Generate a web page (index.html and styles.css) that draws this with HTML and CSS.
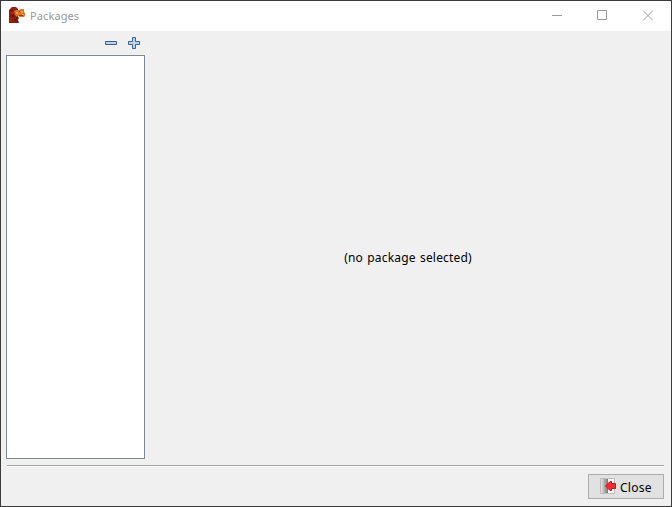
FILE: index.html
```html
<!DOCTYPE html>
<html lang="en">
<head>
<meta charset="utf-8">
<title>Packages</title>
<link rel="stylesheet" href="styles.css">
</head>
<body>
<div class="window">
  <header class="titlebar">
    <svg class="app-icon" width="16" height="16" viewBox="0 0 16 16">
      <path fill="#8f1c0c" d="M0 3 3 0h4l2 2v8l1 1-1 2 1 3H0z"/>
      <path fill="#64100a" d="M1 3h2v1H1zM3 8h2v2H3zM5 12h3v1H5zM7 14h2v1H7zM7 10h2v1H7z"/>
      <path fill="#ab260e" d="M2 5h3v2H2zM1 11h2v3H1zM4 1h3v1H4z"/>
      <path fill="#dc7323" d="M5 4 7 3h4l1-1h3v3l1 1v3l-1 1h-4l-2-1-1 1-2-2z"/>
      <path fill="#f29a4c" d="M12 4h2v2h-2zM13 7h2v1h-2zM7 5h2v2H7z"/>
      <path fill="#8f3b17" d="M10 4h1v1h-1zM10 8h4v1h-4z"/>
    </svg>
    <h1 class="title">Packages</h1>
    <svg class="controls" width="101" height="11" viewBox="0 0 101 11" fill="none" stroke="#999">
      <path d="M0 5.5h10M45.5 .5h9v9h-9z"/>
      <path d="m91 .5 10 10m0-10-10 10"/>
    </svg>
  </header>
  <main class="content">
    <aside class="sidebar">
      <div class="tools">
        <svg width="12" height="12" viewBox="0 0 12 12"><path class="tool-shape" d="M.5 4.5h11v3H.5z"/></svg>
        <svg width="12" height="12" viewBox="0 0 12 12"><path class="tool-shape" d="M4.5 .5h3v4h4v3h-4v4h-3v-4h-4v-3h4z"/></svg>
      </div>
      <div class="list"></div>
    </aside>
    <section class="detail"><span class="message">(no package selected)</span></section>
  </main>
  <footer class="footer">
    <button class="close">
      <svg width="16" height="16" viewBox="0 0 16 16">
        <defs><linearGradient id="door"><stop offset="0" stop-color="#e4e4e4"/><stop offset="1" stop-color="#777"/></linearGradient></defs>
        <path fill="#fafafa" stroke="#bdbdbd" d="M.5 .5h14v15H.5z"/>
        <path fill="url(#door)" d="M1 1h7v14H1z"/>
        <path fill="#fb2a30" stroke="#c01b22" d="M5.5 8 10 3.500h1.500v2h4v5h-4v2H10z"/>
      </svg>
      <span class="close-label">Close</span>
    </button>
  </footer>
</div>
</body>
</html>
```
FILE: styles.css
```css
* { box-sizing: border-box; }
body { margin: 0; font-family: "Noto Sans", "Open Sans", sans-serif; }
svg { display: block; flex: none; }
.window {
  width: 672px;
  height: 507px;
  display: flex;
  flex-direction: column;
  background: #f0f0f0;
  border: 1px solid #3b3b3b;
}
.titlebar {
  height: 30px;
  flex: none;
  display: flex;
  align-items: flex-start;
  padding: 0 18px 0 8px;
  background: #fff;
}
.app-icon { margin-top: 6px; }
.title {
  margin: 7px auto 0 5px;
  font-size: 11px;
  font-weight: 400;
  line-height: 16px;
  letter-spacing: .1px;
  color: #999;
}
.controls { margin-top: 9px; }
.content { flex: 1; display: flex; padding: 0 5px; }
.sidebar { width: 139px; display: flex; flex-direction: column; }
.tools {
  height: 24px;
  display: flex;
  justify-content: flex-end;
  align-items: center;
  gap: 11px;
  padding-right: 5px;
}
.tool-shape { fill: #b9d3f0; stroke: #405d8b; }
.list { flex: 1; background: #fff; border: 1px solid #828790; }
.detail {
  flex: 1;
  display: flex;
  align-items: center;
  justify-content: center;
  padding: 26px 0 0 5px;
}
.message {
  font-size: 12px;
  line-height: 18px;
  letter-spacing: .18px;
  word-spacing: 1px;
  white-space: nowrap;
}
.footer {
  height: 41px;
  margin: 6px 7px 0 6px;
  border-top: 1px solid #a0a0a0;
  box-shadow: inset 0 1px #fff;
  display: flex;
  justify-content: flex-end;
  padding-top: 8px;
}
.close {
  width: 76px;
  height: 25px;
  display: flex;
  align-items: center;
  gap: 4px;
  padding: 0 0 0 11px;
  border: 1px solid #adadad;
  background: #e1e1e1;
  color: #000;
  font: 12px/18px "Noto Sans", "Open Sans", sans-serif;
}
.close svg { margin-bottom: 2px; }
.close-label { padding-top: 2px; letter-spacing: .25px; }
```
